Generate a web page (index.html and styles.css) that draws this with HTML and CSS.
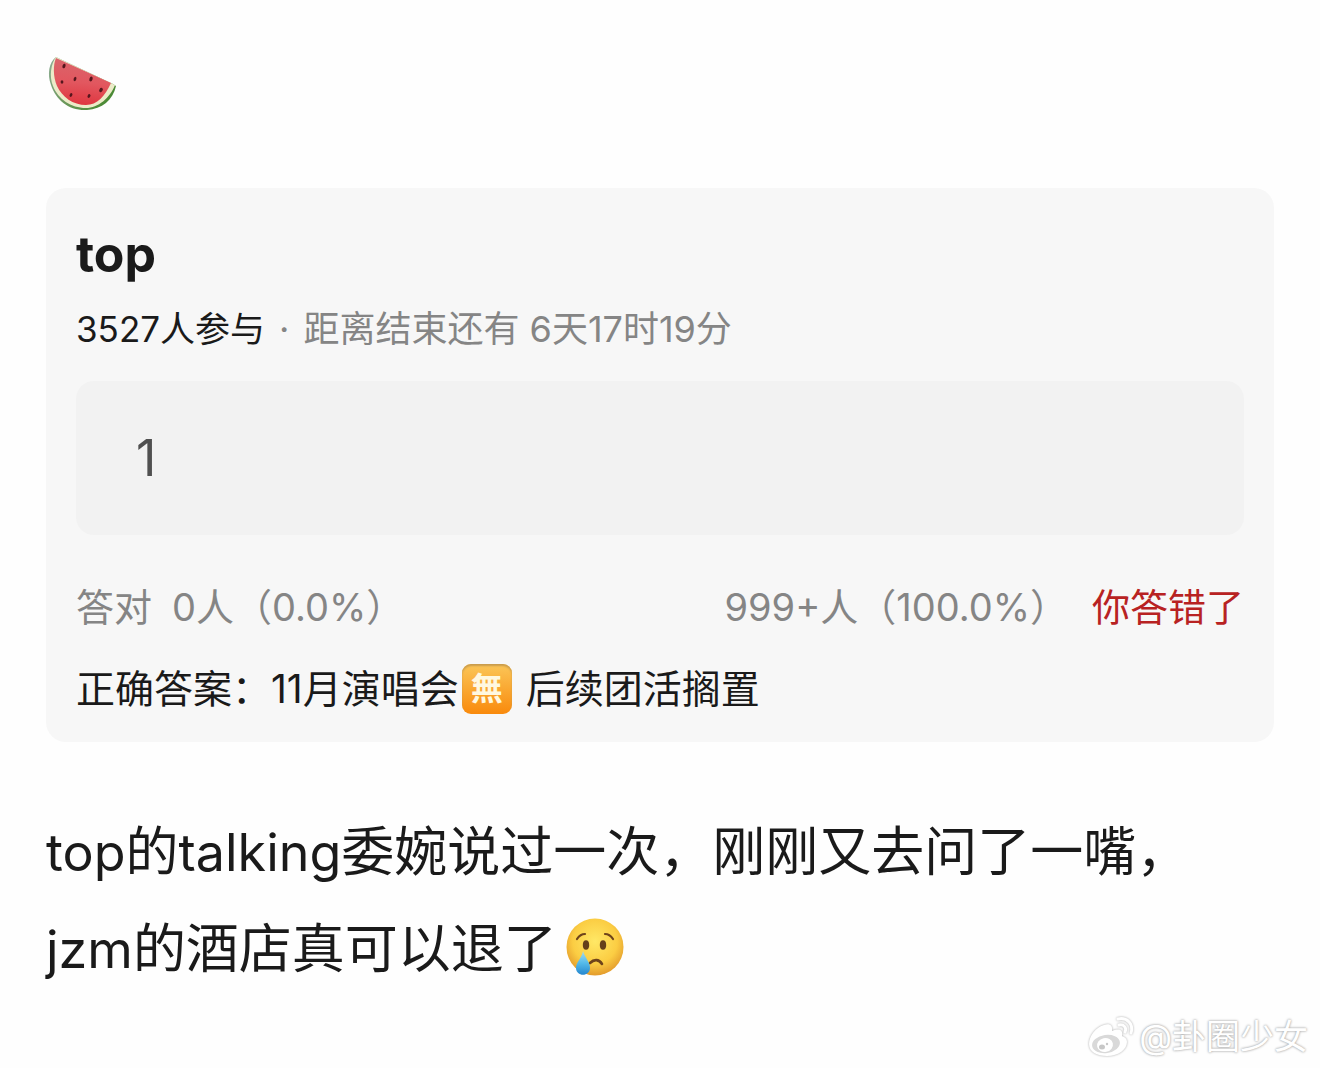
FILE: index.html
```html
<!DOCTYPE html>
<html lang="zh-CN">
<head>
<meta charset="utf-8">
<meta name="viewport" content="width=device-width, initial-scale=1">
<title>top</title>
<link rel="stylesheet" href="styles.css">
</head>
<body>
<main class="post">
  <svg class="melon" viewBox="0 0 72 60" role="img" aria-label="西瓜">
    <defs>
      <linearGradient id="flesh" x1="0.3" y1="0" x2="0.2" y2="1">
        <stop offset="0" stop-color="#d9656b"/><stop offset="0.5" stop-color="#e2575f"/><stop offset="1" stop-color="#df343e"/>
      </linearGradient>
      <linearGradient id="rind" x1="0" y1="0" x2="1" y2="0.6">
        <stop offset="0" stop-color="#8fae98"/><stop offset="0.5" stop-color="#6f9a60"/><stop offset="1" stop-color="#4b8a35"/>
      </linearGradient>
    </defs>
    <path fill="url(#rind)" d="M10 3C3 8 1 20 5 31C10 46 23 57 41 56C56 55 67 46 70 32L67 30Z"/>
    <path fill="#ecebc9" d="M10 3C5 10 3 22 7 32C12 45 25 54 40 54C52 54 64 44 69 31Z"/>
    <path fill="url(#flesh)" d="M10 4C7 11 7 23 11 32C16 43 27 51 40 51C51 51 59 42 65 29Z"/>
    <g fill="#56161d">
      <ellipse cx="18" cy="12" rx="1.5" ry="2.4" transform="rotate(20 18 12)"/>
      <ellipse cx="29" cy="25" rx="1.3" ry="2.2" transform="rotate(20 29 25)"/>
      <ellipse cx="45" cy="25" rx="1.6" ry="2.5" transform="rotate(20 45 25)"/>
      <ellipse cx="16" cy="28" rx="1.4" ry="1.8"/>
      <ellipse cx="55" cy="36" rx="1.7" ry="2.3" transform="rotate(30 55 36)"/>
      <ellipse cx="25" cy="41" rx="1.3" ry="2" transform="rotate(25 25 41)"/>
      <ellipse cx="43" cy="42" rx="1.4" ry="2" transform="rotate(25 43 42)"/>
    </g>
  </svg>

  <section class="card">
    <h1 class="title" id="quiz-title">top</h1>
    <p class="meta"><span class="joined">3527人参与</span><span class="dot">·</span><span>距离结束还有 6天17时19分</span></p>
    <input class="answer" type="text" value="1" readonly aria-labelledby="quiz-title">
    <div class="result">
      <span>答对</span>
      <span class="right-count">0人（0.0%）</span>
      <span class="wrong-count">999+人（100.0%）</span>
      <span class="verdict">你答错了</span>
    </div>
    <p class="solution">正确答案：11月演唱会<span class="badge">無</span>后续团活搁置</p>
  </section>

  <p class="text"><span class="latin">top</span>的<span class="latin">talking</span>委婉说过一次，刚刚又去问了一嘴，<br><span class="latin">jzm</span>的酒店真可以退了<svg class="cry" viewBox="0 0 60 60" role="img" aria-label="哭">
    <defs>
      <radialGradient id="face" cx="0.5" cy="0.4" r="0.6">
        <stop offset="0" stop-color="#ffe866"/><stop offset="0.65" stop-color="#fbcd43"/><stop offset="1" stop-color="#e39b2c"/>
      </radialGradient>
      <linearGradient id="tear" x1="0" y1="0" x2="0" y2="1">
        <stop offset="0" stop-color="#a6dcf0"/><stop offset="0.5" stop-color="#55bbea"/><stop offset="1" stop-color="#2587cf"/>
      </linearGradient>
    </defs>
    <circle cx="30" cy="30" r="28.5" fill="url(#face)"/>
    <g fill="none" stroke="#6e431b" stroke-linecap="round" stroke-width="2.2">
      <path d="M12 22C14 19 16 17 20 17"/><path d="M40 17C44 17 46 19 48 22"/>
      <path d="M25 46C29 42 34 42 37 47" stroke-width="2.6"/>
    </g>
    <g fill="#65401b"><ellipse cx="21" cy="28" rx="3.2" ry="4.8"/><ellipse cx="38" cy="28" rx="3.2" ry="4.8"/></g>
    <path fill="url(#tear)" d="M18 34C17 41 11 45 11 51C11 60 25 60 25 51C25 45 20 41 18 34Z"/>
  </svg></p>
</main>

<footer class="watermark">
  <svg class="weibo" viewBox="0 0 48 42" aria-hidden="true">
    <path fill="#fff" d="M17 9C9 11 2 20 2 28C2 36 10 40 20 40C32 40 40 33 40 26C40 22 37 21 35 20C36 14 33 12 25 15C26 10 23 7 17 9Z"/>
    <ellipse cx="19" cy="28" rx="14" ry="9" fill="#d9d9d9" transform="rotate(-8 19 28)"/>
    <ellipse cx="18" cy="29" rx="8" ry="7" fill="#fff" transform="rotate(-12 18 29)"/>
    <ellipse cx="15" cy="31" rx="3" ry="2.5" fill="#c8c8c8"/><circle cx="20" cy="28" r="1.2" fill="#c8c8c8"/>
    <g fill="none" stroke="#fff" stroke-width="3" stroke-linecap="round"><path d="M31 3C40 1 47 8 44 17"/><path d="M32 9C37 8 40 12 38 16"/></g>
  </svg>
  <span>@卦圈少女</span>
</footer>
</body>
</html>
```
FILE: styles.css
```css
* { box-sizing: border-box; }

body {
  margin: 0;
  min-height: 100vh;
  display: flex;
  flex-direction: column;
  background: #fefefe;
  color: #1a1a1a;
  font-family: Inter, "Noto Sans CJK SC", sans-serif;
}

h1, p { margin: 0; }

.post { padding: 54px 46px 0; }

.melon {
  display: block;
  width: 72px;
  height: 60px;
}

.card {
  margin-top: 74px;
  padding: 34px 30px 24px;
  border-radius: 20px;
  background: #f7f7f7;
}

.title {
  font-size: 50px;
  line-height: 64px;
  font-weight: 700;
}

.meta {
  display: flex;
  margin-top: 15px;
  font-size: 36px;
  line-height: 56px;
  color: #858585;
}

.joined {
  font-size: 35px;
  color: #1a1a1a;
}

.dot { margin: 0 14px; }

.answer {
  display: block;
  width: 100%;
  height: 154px;
  margin-top: 24px;
  padding: 0 60px;
  border: 0;
  border-radius: 18px;
  background: #f2f2f2;
  color: #505050;
  font: inherit;
  font-size: 50px;
  outline: 0;
}

.result {
  display: flex;
  margin-top: 43px;
  font-size: 38px;
  line-height: 58px;
  color: #858585;
}

.right-count { margin-left: 20px; }

.wrong-count { margin-left: auto; }

.verdict {
  margin-left: 24px;
  color: #b82222;
}

.solution {
  display: flex;
  align-items: center;
  margin-top: 24px;
  font-size: 39px;
  line-height: 58px;
}

.badge {
  width: 50px;
  height: 50px;
  margin: 0 14px 0 3px;
  border-radius: 9px;
  background: linear-gradient(#fbc658, #f98a0c);
  box-shadow: inset 0 2px 2px #c99b4c;
  color: #fff8e0;
  font-size: 32px;
  font-weight: 700;
  line-height: 50px;
  text-align: center;
}

.text {
  margin-top: 62px;
  font-size: 53px;
  line-height: 96px;
}

.latin { font-size: 52px; }

.cry {
  width: 60px;
  height: 60px;
  margin-left: 8px;
  vertical-align: -9px;
}

.watermark {
  display: flex;
  justify-content: flex-end;
  align-items: center;
  gap: 4px;
  margin-top: auto;
  padding: 0 12px 7px;
  color: #fff;
  font-size: 34px;
  line-height: 48px;
  text-shadow: 0 0 2px #aaa, 0 0 3px #bbb;
}

.weibo {
  width: 48px;
  height: 42px;
  overflow: visible;
  filter: drop-shadow(0 0 1px #aaa);
}
```
